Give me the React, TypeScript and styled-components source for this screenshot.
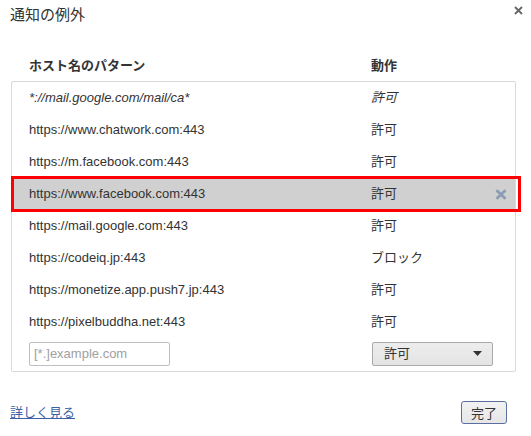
import React from "react";
import styled, { createGlobalStyle } from "styled-components";

const Global = createGlobalStyle`
  html, body { margin: 0; padding: 0; background: #fff; }
  body { font-family: "Liberation Sans", Arial, "Noto Sans CJK JP", sans-serif; color: #333; font-size: 13px; line-height: 16px; }
`;

const Dialog = styled.div`
  width: 531px;
  height: 436px;
  box-sizing: border-box;
  display: flex;
  flex-direction: column;
  padding: 0 13px 0 11px;
`;

const TitleBar = styled.div`
  display: flex;
  justify-content: space-between;
  align-items: flex-start;
  height: 50px;
`;

const Title = styled.h1`
  margin: 5px 0 0 -1px;
  font-size: 15px;
  font-weight: normal;
  color: #333;
  line-height: 20px;
`;

const CloseBtn = styled.div`
  margin-top: 4px;
  margin-right: -6px;
  width: 12px;
  height: 12px;
  display: flex;
  align-items: center;
  justify-content: center;
`;

const Header = styled.div`
  display: grid;
  grid-template-columns: 342px 1fr;
  padding-left: 18px;
  height: 31px;
  align-items: center;
  font-weight: bold;
  font-size: 13px;
  line-height: 16px;
  color: #333;
`;

const ListBox = styled.div`
  border: 1px solid #d9d9d9;
  border-radius: 2px;
  width: 505px;
  box-sizing: border-box;
  display: flex;
  flex-direction: column;
`;

const Row = styled.div<{ $selected?: boolean; $italic?: boolean }>`
  display: grid;
  grid-template-columns: 342px 1fr 24px;
  align-items: center;
  height: 32px;
  box-sizing: border-box;
  padding-left: 17px;
  font-size: 13px;
  line-height: 16px;
  color: #333;
  font-style: ${(p) => (p.$italic ? "italic" : "normal")};
  background: ${(p) => (p.$selected ? "#d0d0d0" : "transparent")};
  position: relative;
  ${(p) =>
    p.$selected
      ? `&::after {
    content: "";
    position: absolute;
    left: -1px;
    top: -2px;
    right: -6px;
    bottom: -2px;
    border: 3px solid #f00;
    pointer-events: none;
  }`
      : ""}
`;

const Cell = styled.span`
  display: block;
  height: 16px;
  line-height: 16px;
  white-space: nowrap;
`;

const Action = styled(Cell)<{ $italic?: boolean }>`
  font-style: ${(p) => (p.$italic ? "italic" : "normal")};
`;

const RemoveIcon = styled.div`
  display: flex;
  align-items: center;
  justify-content: center;
  margin-left: -5px;
`;

const InputRow = styled.div`
  display: grid;
  grid-template-columns: 343px 1fr;
  align-items: center;
  height: 33px;
  box-sizing: border-box;
  padding-left: 17px;
  padding-bottom: 2px;
`;

const PatternInput = styled.input`
  width: 141px;
  height: 24px;
  box-sizing: border-box;
  border: 1px solid #bfbfbf;
  border-radius: 2px;
  font-family: "Liberation Sans", Arial, sans-serif;
  font-size: 13px;
  padding: 0 4px;
  color: #333;
  &::placeholder { color: #a0a0a0; }
`;

const Select = styled.div`
  width: 121px;
  height: 24px;
  box-sizing: border-box;
  border: 1px solid #aaa;
  border-radius: 2px;
  background: linear-gradient(#ededed, #e4e4e4);
  display: flex;
  align-items: center;
  justify-content: space-between;
  padding: 0 10px 0 11px;
  font-size: 13px;
  color: #333;
`;

const Footer = styled.div`
  margin-top: auto;
  display: flex;
  justify-content: space-between;
  align-items: center;
  padding: 0 11px 12px 0;
`;

const MoreLink = styled.a`
  color: #3c5fa8;
  text-decoration: underline;
  font-size: 13px;
  line-height: 16px;
  margin-left: -1px;
`;

const DoneBtn = styled.button`
  width: 46px;
  height: 23px;
  border: 1px solid #5a6fa0;
  border-radius: 3px;
  background: linear-gradient(#f2f2f2, #e6e6e6);
  font-family: "Liberation Sans", Arial, "Noto Sans CJK JP", sans-serif;
  font-size: 13px;
  color: #333;
  padding: 0;
`;

const rows: { host: string; action: string; italic?: boolean; selected?: boolean }[] = [
  { host: "*://mail.google.com/mail/ca*", action: "許可", italic: true },
  { host: "https://www.chatwork.com:443", action: "許可" },
  { host: "https://m.facebook.com:443", action: "許可" },
  { host: "https://www.facebook.com:443", action: "許可", selected: true },
  { host: "https://mail.google.com:443", action: "許可" },
  { host: "https://codeiq.jp:443", action: "ブロック" },
  { host: "https://monetize.app.push7.jp:443", action: "許可" },
  { host: "https://pixelbuddha.net:443", action: "許可" },
];

export default function App() {
  return (
    <>
      <Global />
      <Dialog>
        <TitleBar>
          <Title>通知の例外</Title>
          <CloseBtn>
            <svg width="9" height="9" viewBox="0 0 9 9">
              <path d="M1 1L8 8M8 1L1 8" stroke="#666" strokeWidth="1.8" />
            </svg>
          </CloseBtn>
        </TitleBar>
        <Header>
          <Cell>ホスト名のパターン</Cell>
          <Cell>動作</Cell>
        </Header>
        <ListBox>
          {rows.map((r) => (
            <Row key={r.host} $selected={r.selected} $italic={r.italic}>
              <Cell>{r.host}</Cell>
              <Action $italic={r.italic}>{r.action}</Action>
              {r.selected ? (
                <RemoveIcon>
                  <svg width="12" height="11" viewBox="0 0 12 11">
                    <path d="M1.5 1.2L10.5 9.8M10.5 1.2L1.5 9.8" stroke="#8a9db3" strokeWidth="2.8" />
                  </svg>
                </RemoveIcon>
              ) : (
                <span />
              )}
            </Row>
          ))}
          <InputRow>
            <PatternInput placeholder="[*.]example.com" />
            <Select>
              <span>許可</span>
              <svg width="9" height="5" viewBox="0 0 9 5">
                <path d="M0 0H9L4.5 5Z" fill="#333" />
              </svg>
            </Select>
          </InputRow>
        </ListBox>
        <Footer>
          <MoreLink href="#">詳しく見る</MoreLink>
          <DoneBtn>完了</DoneBtn>
        </Footer>
      </Dialog>
    </>
  );
}
